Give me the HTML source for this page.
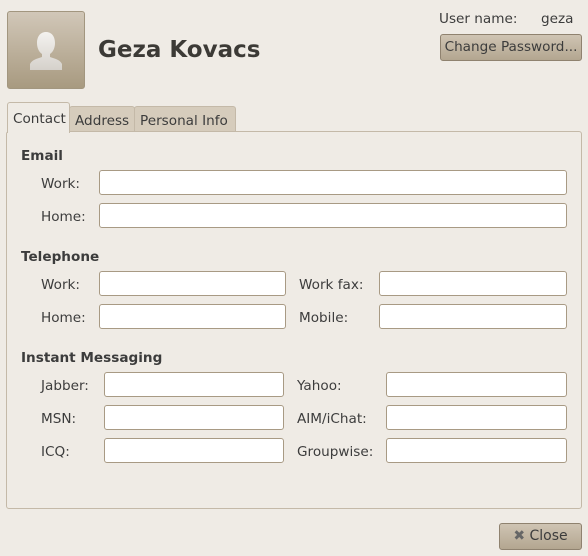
<!DOCTYPE html><html><head><style>
body{margin:0;width:588px;height:556px;background:#efebe5;font-family:"DejaVu Sans","Liberation Sans",sans-serif;font-size:13.6px;color:#3c3c3c;position:relative;overflow:hidden}
.a{position:absolute}
.in{position:absolute;background:#fff;border:1px solid #a89a84;border-radius:3px;box-sizing:border-box;height:25px}
.l{position:absolute;line-height:16px}
.h{position:absolute;font-weight:bold;line-height:16px}
.btn{position:absolute;border:1px solid #8f826f;border-radius:3px;background:linear-gradient(#cfc4b3,#b3a690);box-sizing:border-box;text-align:center}
</style></head><body>
<div class="a" style="left:7px;top:11px;width:78px;height:78px;border-radius:3px;border:1px solid #a2967f;box-sizing:border-box;background:linear-gradient(#d1c7b8,#a89a80)">
<svg width="78" height="78" viewBox="0 0 78 78" style="position:absolute;left:-1px;top:-1px"><defs><linearGradient id="g" x1="0" y1="0" x2="0" y2="1"><stop offset="0" stop-color="#f4f2ef"/><stop offset="1" stop-color="#d5d1cb"/></linearGradient></defs>
<path d="M39 21c-6 0-9 5-9 11 0 5 2 9 5 11v3c-6 2-10 3-12 7v6h32v-6c-2-4-6-5-12-7v-3c3-2 5-6 5-11 0-6-3-11-9-11z" fill="url(#g)"/></svg></div>
<div class="a" style="left:98px;top:37px;font-size:23px;font-weight:bold;color:#3c3a36">Geza Kovacs</div>
<div class="l" style="left:439px;top:11px">User name:</div>
<div class="l" style="left:541px;top:11px">geza</div>
<div class="btn" style="left:440px;top:34px;width:142px;height:27px;line-height:25px">Change Password...</div>
<div class="a" style="left:6px;top:131px;width:576px;height:378px;border:1px solid #c4b9a8;border-radius:3px;box-sizing:border-box;background:#efebe5"></div>
<div class="a" style="left:69px;top:106px;width:66px;height:25px;background:#d6ccbc;border:1px solid #c4b9a8;border-bottom:none;box-sizing:border-box;border-radius:3px 3px 0 0"></div>
<div class="a" style="left:134px;top:106px;width:102px;height:25px;background:#d6ccbc;border:1px solid #c4b9a8;border-bottom:none;box-sizing:border-box;border-radius:3px 3px 0 0"></div>
<div class="a" style="left:7px;top:102px;width:63px;height:31px;background:#efebe5;border:1px solid #c4b9a8;border-bottom:none;box-sizing:border-box;border-radius:3px 3px 0 0"></div>
<div class="l" style="left:13px;top:111px">Contact</div>
<div class="l" style="left:75px;top:113px">Address</div>
<div class="l" style="left:140px;top:113px">Personal Info</div>
<div class="h" style="left:21px;top:148px">Email</div>
<div class="l" style="left:41px;top:176px">Work:</div><div class="in" style="left:99px;top:170px;width:468px"></div>
<div class="l" style="left:41px;top:209px">Home:</div><div class="in" style="left:99px;top:203px;width:468px"></div>
<div class="h" style="left:21px;top:249px">Telephone</div>
<div class="l" style="left:41px;top:277px">Work:</div><div class="in" style="left:99px;top:271px;width:187px"></div>
<div class="l" style="left:299px;top:277px">Work fax:</div><div class="in" style="left:379px;top:271px;width:188px"></div>
<div class="l" style="left:41px;top:310px">Home:</div><div class="in" style="left:99px;top:304px;width:187px"></div>
<div class="l" style="left:299px;top:310px">Mobile:</div><div class="in" style="left:379px;top:304px;width:188px"></div>
<div class="h" style="left:21px;top:350px">Instant Messaging</div>
<div class="l" style="left:41px;top:378px">Jabber:</div><div class="in" style="left:104px;top:372px;width:180px"></div>
<div class="l" style="left:297px;top:378px">Yahoo:</div><div class="in" style="left:386px;top:372px;width:181px"></div>
<div class="l" style="left:41px;top:411px">MSN:</div><div class="in" style="left:104px;top:405px;width:180px"></div>
<div class="l" style="left:297px;top:411px">AIM/iChat:</div><div class="in" style="left:386px;top:405px;width:181px"></div>
<div class="l" style="left:41px;top:444px">ICQ:</div><div class="in" style="left:104px;top:438px;width:180px"></div>
<div class="l" style="left:297px;top:444px">Groupwise:</div><div class="in" style="left:386px;top:438px;width:181px"></div>
<div class="btn" style="left:499px;top:523px;width:83px;height:27px;line-height:25px;font-size:14px"><span style="color:#666;font-weight:bold">✖</span> Close</div>
</body></html>
